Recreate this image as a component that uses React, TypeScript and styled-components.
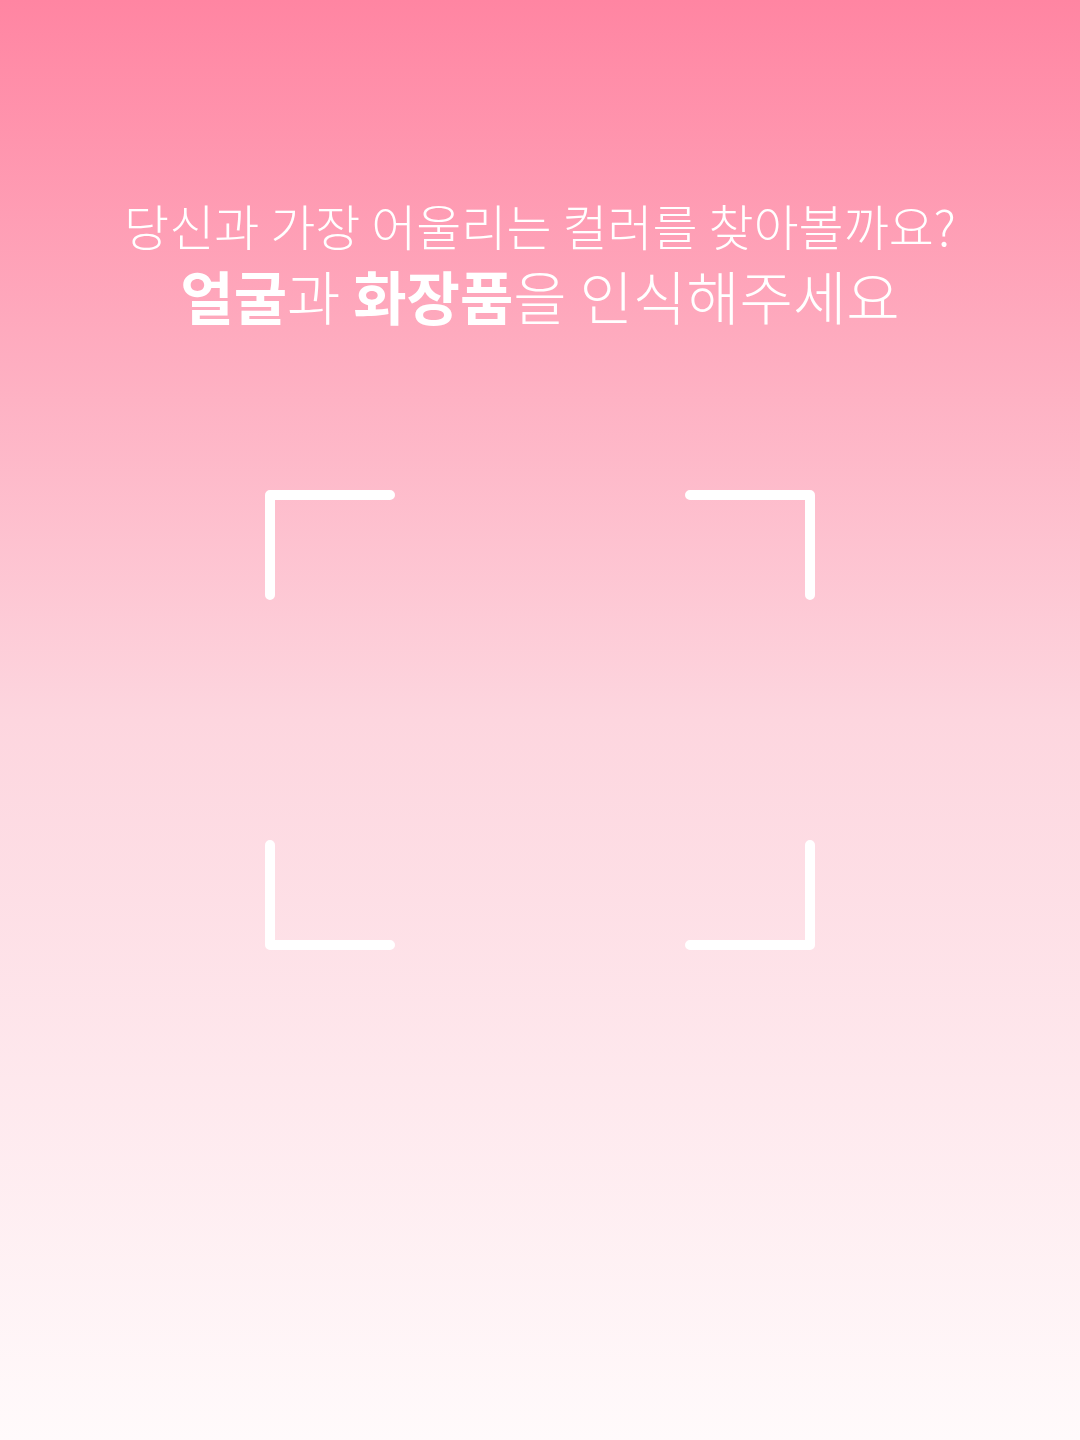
import styled, { createGlobalStyle } from "styled-components";

const GlobalStyle = createGlobalStyle`
  html, body {
    margin: 0;
    padding: 0;
  }
  body {
    font-family: "Noto Sans CJK KR", "Noto Sans", sans-serif;
  }
`;

const Screen = styled.main`
  display: flex;
  flex-direction: column;
  align-items: center;
  min-height: 1440px;
  padding-top: 190px;
  box-sizing: border-box;
  background: linear-gradient(180deg, #ff85a2 0%, #fdd6df 50%, #fffafb 100%);
  color: #ffffff;
`;

const Heading = styled.header`
  display: flex;
  flex-direction: column;
  align-items: center;
  text-align: center;
`;

const Question = styled.p`
  margin: 0;
  font-size: 49px;
  font-weight: 300;
  line-height: 70px;
`;

const Instruction = styled.h1`
  margin: 0;
  font-size: 58px;
  font-weight: 300;
  line-height: 70px;

  strong {
    font-weight: 700;
  }
`;

const Frame = styled.div`
  display: grid;
  grid-template-columns: 130px 130px;
  grid-template-rows: 110px 110px;
  justify-content: space-between;
  align-content: space-between;
  width: 550px;
  height: 460px;
  margin-top: 160px;
`;

type Corner = "tl" | "tr" | "bl" | "br";

const paths: Record<Corner, string> = {
  tl: "M5 105 V5 H125",
  tr: "M5 5 H125 V105",
  bl: "M5 5 V105 H125",
  br: "M5 105 H125 V5",
};

function Bracket({ corner }: { corner: Corner }) {
  return (
    <svg width="130" height="110" viewBox="0 0 130 110" fill="none">
      <path
        d={paths[corner]}
        stroke="#ffffff"
        strokeWidth="10"
        strokeLinecap="round"
        strokeLinejoin="round"
      />
    </svg>
  );
}

export default function App() {
  return (
    <>
      <GlobalStyle />
      <Screen>
        <Heading>
          <Question>당신과 가장 어울리는 컬러를 찾아볼까요?</Question>
          <Instruction>
            <strong>얼굴</strong>과 <strong>화장품</strong>을 인식해주세요
          </Instruction>
        </Heading>
        <Frame>
          <Bracket corner="tl" />
          <Bracket corner="tr" />
          <Bracket corner="bl" />
          <Bracket corner="br" />
        </Frame>
      </Screen>
    </>
  );
}
